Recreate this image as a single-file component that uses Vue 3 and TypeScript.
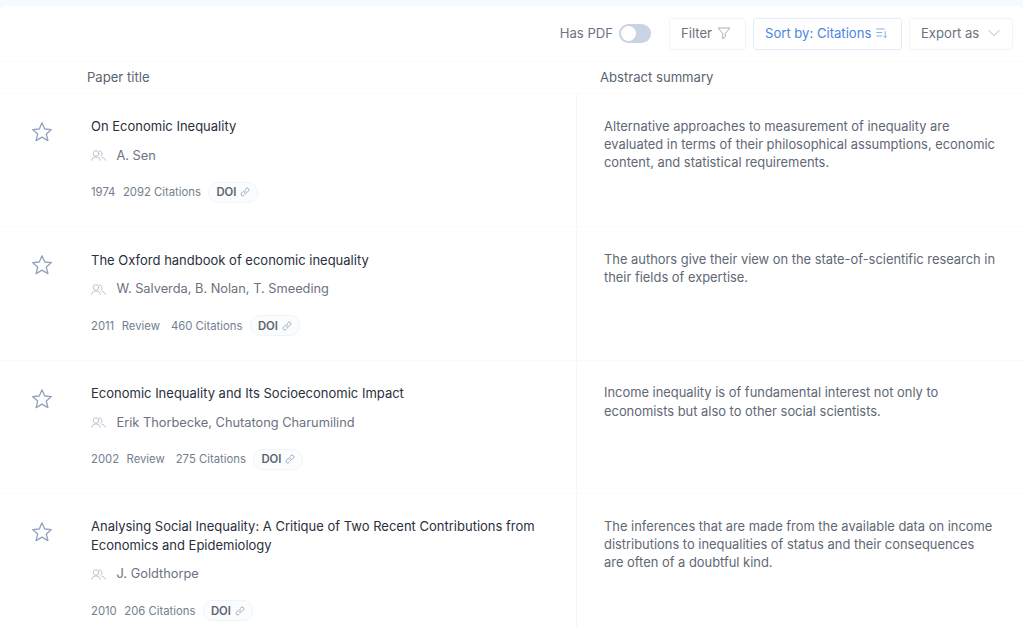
<script setup lang="ts">
interface Paper {
  title: string
  authors: string
  year: number
  review?: boolean
  citations: number
  summary: string
}

const papers: Paper[] = [
  {
    title: 'On Economic Inequality',
    authors: 'A. Sen',
    year: 1974,
    citations: 2092,
    summary:
      'Alternative approaches to measurement of inequality are evaluated in terms of their philosophical assumptions, economic content, and statistical requirements.',
  },
  {
    title: 'The Oxford handbook of economic inequality',
    authors: 'W. Salverda, B. Nolan, T. Smeeding',
    year: 2011,
    review: true,
    citations: 460,
    summary:
      'The authors give their view on the state-of-scientific research in their fields of expertise.',
  },
  {
    title: 'Economic Inequality and Its Socioeconomic Impact',
    authors: 'Erik Thorbecke, Chutatong Charumilind',
    year: 2002,
    review: true,
    citations: 275,
    summary:
      'Income inequality is of fundamental interest not only to economists but also to other social scientists.',
  },
  {
    title: 'Analysing Social Inequality: A Critique of Two Recent Contributions from Economics and Epidemiology',
    authors: 'J. Goldthorpe',
    year: 2010,
    citations: 206,
    summary:
      'The inferences that are made from the available data on income distributions to inequalities of status and their consequences are often of a doubtful kind.',
  },
]
</script>

<template>
  <div class="page">
    <div class="panel">
      <div class="toolbar">
        <span class="pdf-label">Has PDF</span>
        <span class="toggle"><span class="knob"></span></span>
        <button class="btn filter">
          Filter
          <svg width="14" height="14" viewBox="0 0 14 14" fill="none" stroke="#9aa5b4" stroke-width="0.9" stroke-linejoin="round">
            <path d="M1 2h12L8.300 7.400v3.400l-2.600 2V7.400z" />
          </svg>
        </button>
        <button class="btn sort">
          Sort by: Citations
          <svg width="12" height="12" viewBox="0 0 12 12" fill="none" stroke="#7aa7ea" stroke-width="0.9" stroke-linecap="round" stroke-linejoin="round">
            <path d="M.8 2h7.400M.8 5.500h5M.8 9h5M9.200 4.500v6M7.800 9.200l1.400 1.400 1.400-1.400" />
          </svg>
        </button>
        <button class="btn export">
          Export as
          <svg width="12" height="12" viewBox="0 0 12 12" fill="none" stroke="#aab2bf" stroke-width="0.9" stroke-linecap="round" stroke-linejoin="round">
            <path d="M.8 3.500 6 8.500l5.200-5" />
          </svg>
        </button>
      </div>

      <div class="head">
        <div class="head-title">Paper title</div>
        <div class="head-summary">Abstract summary</div>
      </div>

      <div v-for="paper in papers" :key="paper.title" class="row">
        <div class="star-cell">
          <svg width="22" height="22" viewBox="0 0 22 22" fill="none" stroke="#8fa3bd" stroke-width="1.300" stroke-linejoin="round">
            <path d="M11 1.800l2.700 6.200 6.700.6-5.100 4.400 1.600 6.600L11 16.100l-5.900 3.500 1.600-6.600L1.600 8.600l6.700-.6z" />
          </svg>
        </div>
        <div class="info">
          <div class="title">{{ paper.title }}</div>
          <div class="authors">
            <svg width="15" height="11" viewBox="0 0 15 11" fill="none" stroke="#b3bdcb" stroke-width="0.9" stroke-linecap="round">
              <circle cx="5" cy="3.500" r="2.800" />
              <path d="M.6 10.300c.3-2.100 2-3.300 4.400-3.300s4.100 1.200 4.400 3.300" />
              <path d="M8.300.9a2.800 2.800 0 0 1 1.500 5.200M11 7.200c1.800.4 3 1.500 3.400 3.100" />
            </svg>
            <span>{{ paper.authors }}</span>
          </div>
          <div class="meta">
            <span>{{ paper.year }}</span>
            <span v-if="paper.review" class="review">Review</span>
            <span>{{ paper.citations }} Citations</span>
            <span class="doi">
              DOI
              <svg width="10" height="10" viewBox="0 0 10 10" fill="none" stroke="#94a3b8" stroke-width="0.9" stroke-linecap="round">
                <path d="M4.200 5.800a1.700 1.700 0 0 0 2.400 0l1.900-1.900a1.700 1.700 0 0 0-2.400-2.400l-.7.700" />
                <path d="M5.800 4.200a1.700 1.700 0 0 0-2.400 0L1.500 6.100a1.700 1.700 0 0 0 2.400 2.400l.7-.7" />
              </svg>
            </span>
          </div>
        </div>
        <div class="summary">{{ paper.summary }}</div>
      </div>
    </div>
  </div>
</template>

<style scoped>
.page {
  height: 628px;
  overflow: hidden;
  background: #f7fafd;
  padding-top: 6px;
  box-sizing: border-box;
  font-family: Inter, "Liberation Sans", sans-serif;
}

.panel {
  background: #fff;
  height: 622px;
  overflow: hidden;
  border-radius: 6px 6px 0 0;
}

.toolbar {
  display: flex;
  align-items: center;
  justify-content: flex-end;
  height: 56px;
  padding: 0 10px 0 0;
  box-sizing: border-box;
  border-bottom: 1px solid #fafafa;
}

.pdf-label {
  font-size: 13.1px;
  color: #6b7280;
  margin: 0 6px 1px 0;
}

.toggle {
  display: block;
  width: 32px;
  height: 19px;
  border-radius: 10px;
  background: #c9d3e2;
  margin: 0 18px 1px 0;
  position: relative;
}

.knob {
  position: absolute;
  left: 2px;
  top: 2px;
  width: 15px;
  height: 15px;
  border-radius: 50%;
  background: #fff;
}

.btn {
  display: flex;
  align-items: center;
  height: 32px;
  margin-left: 7px;
  box-sizing: border-box;
  border: 1px solid #f3f4f6;
  border-radius: 3px;
  background: #fff;
  font-family: inherit;
  font-size: 13.1px;
  color: #6b7280;
  padding: 0 11px 2px;
}

.filter {
  margin-left: 0;
  width: 77px;
  gap: 5px;
}

.sort {
  width: 149px;
  gap: 5px;
  color: #4a86e0;
  border-color: #e2ecfa;
}

.export {
  width: 104px;
  gap: 9px;
}

.head {
  display: flex;
  height: 32px;
  padding-bottom: 1px;
  box-sizing: border-box;
  align-items: center;
  border-bottom: 1px solid #fafafa;
  font-size: 13.1px;
  color: #5b6470;
}

.head-title {
  width: 600px;
  padding-left: 87px;
  box-sizing: border-box;
}

.row {
  display: flex;
  border-bottom: 1px solid #fafafa;
  min-height: 132.33px;
}

.star-cell {
  width: 91px;
  flex-shrink: 0;
  padding: 27px 0 0 30.500px;
  box-sizing: border-box;
}

.info {
  width: 486px;
  flex-shrink: 0;
  padding: 23.300px 30px 0 0;
  box-sizing: border-box;
  border-right: 1px solid #f6f6f7;
}

.title {
  font-size: 13px;
  font-weight: 400;
  line-height: 18.3px;
  color: #2a303c;
}

.authors {
  display: flex;
  align-items: center;
  gap: 10.500px;
  margin-top: 11.300px;
  font-size: 12.8px;
  line-height: 18px;
  color: #6b7280;
}

.meta {
  display: flex;
  align-items: center;
  gap: 7.500px;
  margin-top: 17px;
  padding-bottom: 20px;
  font-size: 11.3px;
  color: #737e8e;
}

.review {
  margin-right: 3.500px;
}

.doi {
  display: flex;
  align-items: center;
  gap: 4px;
  height: 19px;
  padding: 0 7px;
  border: 1px solid #f1f4f8;
  border-radius: 10px;
  background: #fbfcfd;
  font-weight: 600;
  color: #5b6470;
}

.summary {
  flex: 1;
  padding: 23.700px 26px 0 27px;
  font-size: 12.9px;
  line-height: 18.3px;
  color: #5f6875;
}
</style>
